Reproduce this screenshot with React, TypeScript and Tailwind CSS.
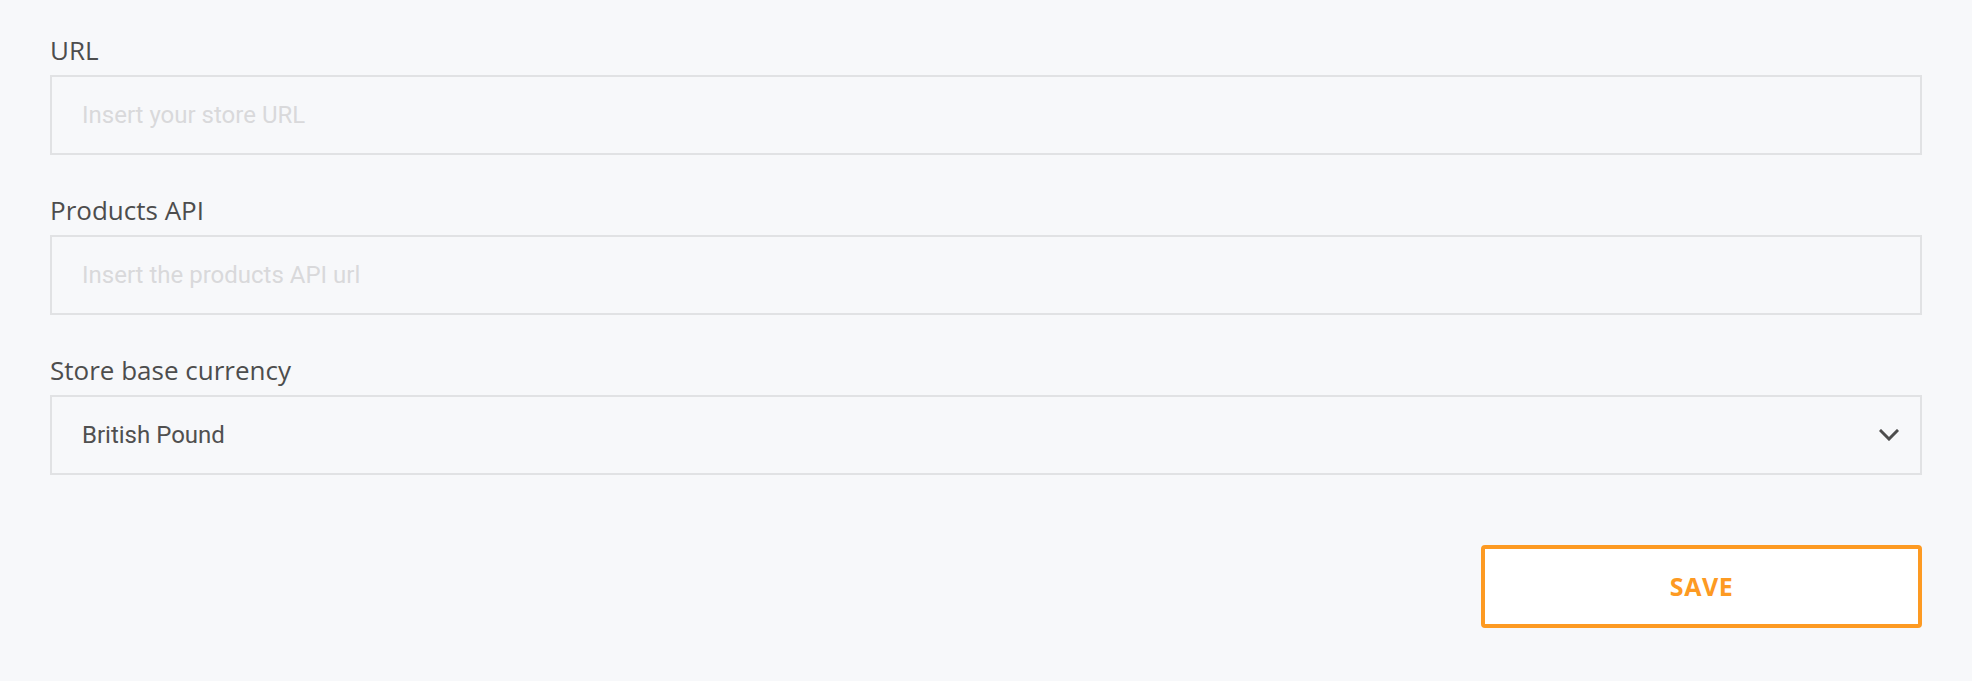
import React from "react";

const fields = [
  { label: "URL", placeholder: "Insert your store URL" },
  { label: "Products API", placeholder: "Insert the products API url" },
];

function Label({ children }: { children: React.ReactNode }) {
  return (
    <div className="h-[30px] text-[26px] leading-[30px] text-[#4d4d4d] font-['Open_Sans',sans-serif] mb-[10px]">
      {children}
    </div>
  );
}

export default function App() {
  return (
    <div className="w-full min-h-screen bg-[#f7f8fa] px-[50px] pt-[35px] pb-[52px]">
      <div className="flex flex-col gap-10">
        {fields.map((f) => (
          <div key={f.label}>
            <Label>{f.label}</Label>
            <input
              type="text"
              placeholder={f.placeholder}
              className="block w-full h-[80px] border-2 border-[#e1e2e4] bg-[#f7f8fa] px-[30px] text-[24px] text-[#4d4d4d] font-['Roboto',sans-serif] placeholder:text-[#d9d9db] outline-none"
            />
          </div>
        ))}
        <div>
          <Label>Store base currency</Label>
          <div className="flex items-center justify-between w-full h-[80px] border-2 border-[#e1e2e4] bg-[#f7f8fa] pl-[30px] pr-[21px]">
            <span className="text-[24px] font-normal text-[#505050] font-['Roboto',sans-serif]">
              British Pound
            </span>
            <svg width="20" height="12" viewBox="0 0 20 12" fill="none">
              <path d="M2 2 L10 10 L18 2" stroke="#4d4d4d" strokeWidth="3" strokeLinecap="square" />
            </svg>
          </div>
        </div>
      </div>
      <div className="flex justify-end mt-[70px]">
        <button className="w-[441px] h-[83px] bg-white border-[4px] border-[#fd9a22] rounded-[4px] text-[#fd9a22] text-[25px] font-bold tracking-[0.5px] font-['Open_Sans',sans-serif]">
          SAVE
        </button>
      </div>
    </div>
  );
}
